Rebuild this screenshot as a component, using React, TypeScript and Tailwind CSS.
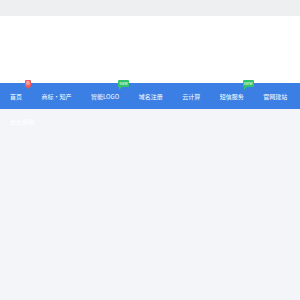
import React from "react";

const items: { label: string; badge?: "hot" | "new" }[] = [
  { label: "首页", badge: "hot" },
  { label: "商标·知产" },
  { label: "智能LOGO", badge: "new" },
  { label: "域名注册" },
  { label: "云计算" },
  { label: "短信服务", badge: "new" },
  { label: "官网建站" },
];

function Badge({ kind }: { kind: "hot" | "new" }) {
  if (kind === "hot") {
    return (
      <span className="absolute left-[calc(100%+3px)] top-[-14px] flex flex-col items-center">
        <span className="flex h-[7px] w-[6px] items-center justify-center rounded-[1px] bg-[#f0575a] text-[4px] leading-none text-white">热</span>
        <span className="h-0 w-0 border-l-[2px] border-r-[2px] border-t-[2px] border-l-transparent border-r-transparent border-t-[#f0575a]" />
      </span>
    );
  }
  return (
    <span className="absolute left-[calc(100%-1px)] top-[-14px] flex flex-col items-start">
      <span className="flex h-[7px] w-[11px] items-center justify-center rounded-[1px] bg-[#2fc46b] text-[4px] leading-none text-white">New</span>
      <span className="ml-[1px] h-0 w-0 border-r-[3px] border-t-[3px] border-r-transparent border-t-[#2fc46b]" />
    </span>
  );
}

export default function App() {
  return (
    <div className="flex min-h-[300px] w-[300px] flex-col bg-[#f4f5f9] font-['Noto_Sans_CJK_SC',sans-serif]">
      <div className="h-[16px] bg-[#eeeff1]" />
      <div className="h-[67px] bg-white" />
      <div className="flex h-[26px] items-center gap-[19.5px] bg-[#3b7fe4] pl-[10px] pt-[1px] text-[6px] leading-none text-white">
        {items.map((it) => (
          <span key={it.label} className="relative whitespace-nowrap">
            {it.label}
            {it.badge && <Badge kind={it.badge} />}
          </span>
        ))}
      </div>
      <div className="px-[10px] pt-[10px] text-[6px] leading-none text-white">企业邮箱</div>
    </div>
  );
}
